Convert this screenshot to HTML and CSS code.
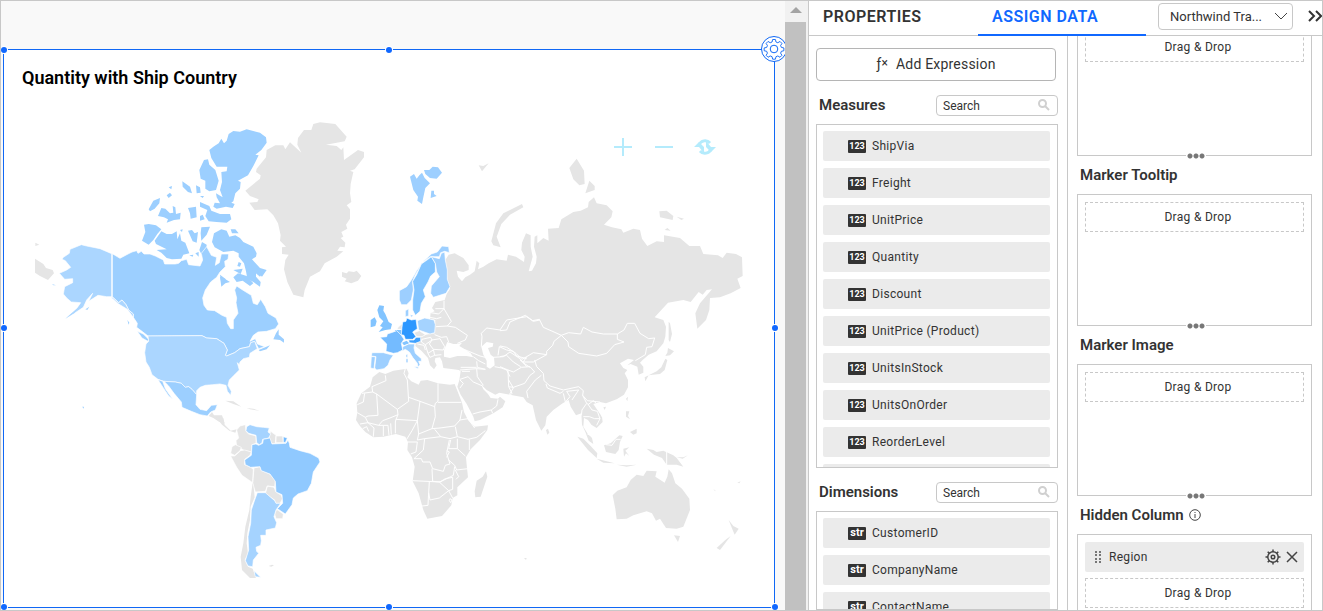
FILE: index.html
```
<!DOCTYPE html>
<html lang="en">
<head>
<meta charset="utf-8">
<title>Dashboard designer</title>
<link rel="stylesheet" href="styles.css">
</head>
<body>
<div class="app">
<main class="canvas">
<section class="widget">
<h1 class="widget-title">Quantity with Ship Country</h1>
<svg class="map" viewBox="0 100 770 507" role="img" aria-label="World map of quantity by ship country">
<g transform="translate(-4 0)">
<g transform="translate(20 110) scale(.33333)" class="canada islands">
<path d="M568,120L580,110 596,100 604,86 612,100 620,92 626,72 640,63 660,65 680,58 720,68 738,82 740,98 724,120 706,134 716,136 700,168 684,196 654,212 662,216 660,236 646,250 640,274 634,278 644,282 638,294 618,290 590,296 580,290 584,278 600,280 590,262 588,250 608,262 600,240 606,216 604,186 620,184 622,170 590,170 574,144Z"/>
<path d="M552,150L564,148 568,164 586,180 596,212 588,240 568,244 556,236 556,212 542,206 538,180Z"/>
<path d="M487,214L510,230 516,250 504,246 488,230ZM528,226L540,232 542,248 530,250ZM446,232L456,228 454,238ZM440,256L450,248 456,256 446,264ZM386,298L400,272 420,264 418,280 404,296 390,304ZM424,294L436,296 450,310 460,308 458,288 466,292 468,312 482,308 480,328 462,330 440,338 444,328 432,322 414,318ZM504,294L528,290 530,322 512,326 510,310ZM540,276L568,288 574,302 600,312 630,312 634,328 620,338 590,336 566,334 556,318 562,300 540,290ZM540,318L548,314 554,328 540,332ZM540,258L552,258 548,264Z"/>
<path d="M372,344L386,342 408,346 424,358 412,372 400,390 386,404 366,392 376,366ZM424,364L440,372 456,372 470,364 472,388 480,370 484,392 496,398 508,430 490,434 484,446 456,448 440,444 424,428 410,420 440,418 408,402 404,392ZM504,362L516,360 524,370 534,366 530,398 518,394ZM544,352L570,350 560,374 544,392 542,370ZM546,396L560,404 558,432 546,436 538,420ZM508,436L520,434 518,440ZM526,430L536,426 536,440Z"/>
<path d="M582,370L604,358 620,362 628,380 646,376 660,384 670,396 700,410 710,430 708,440 696,448 720,474 740,480 726,500 708,484 708,500 722,516 720,530 700,516 682,506 678,484 672,460 656,440 656,430 640,422 610,426 584,412 576,396ZM632,358L646,358 656,370 636,370ZM600,500L614,506 630,516 616,520 604,530ZM656,456L664,460 660,470 652,468ZM480,360L488,358 486,366Z"/>
</g>
<g transform="translate(20 110) scale(.33333)" class="land islands">
<path d="M45,446L70,462 78,474 98,480 102,490 84,510 60,498 45,488ZM46,398L58,404 46,408Z"/>
</g>
<g transform="translate(20 270) scale(.33333)">
<path class="canada" d="M277,-49L300,-35 324,-48 336,-54 350,-58 354,-50 364,-56 372,-48 390,-48 406,-42 430,-30 434,-18 466,-18 476,-20 484,-28 500,-32 506,-16 540,-12 548,-30 544,-50 560,-70 574,-44 590,-38 586,-14 598,-22 604,-48 626,-48 624,-32 614,-26 616,-10 600,6 590,22 572,36 556,60 548,84 552,106 562,120 584,122 606,136 620,142 622,160 632,176 640,176 640,150 654,130 648,98 650,84 644,60 650,48 668,60 694,76 700,100 712,104 722,88 736,110 744,130 768,144 776,162 766,176 740,184 714,186 700,196 690,214 706,206 712,222 734,230 716,236 704,214 692,218 688,230 660,236 644,248 620,258 616,256 622,240 612,220 590,206 560,204 546,197 384,198 366,184 350,172 352,160 340,142 340,132 326,120 318,104 306,90 296,98 277,80ZM352,184L370,192 386,208 384,214 366,204Z"/>
<path class="canada islands" d="M716,240L750,226 740,238 720,244ZM776,178L776,194 792,208 792,218 780,210 760,208 768,190ZM322,150L328,158 326,164ZM640,22L654,10 680,18 700,40 690,48 668,32 650,36ZM600,14L618,28 604,40ZM690,-20L712,-4 724,14 720,20 700,4ZM640,0L668,-4 662,12Z"/>
<path class="usa" d="M384,198L546,197 560,204 590,206 612,220 622,240 616,256 620,258 644,248 660,236 688,230 692,218 704,214 712,236 690,250 688,262 670,266 660,276 658,284 652,278 658,300 642,316 628,330 624,346 634,364 632,376 622,364 618,346 600,342 578,344 556,346 540,352 530,362 530,374 516,358 506,350 496,352 484,340 466,336 432,334 414,328 396,314 388,292 378,276 374,248 378,222 386,214Z"/>
<path class="usa" d="M275,-49L240,-64 200,-72 184,-76 150,-62 148,-50 130,-38 126,-32 136,-28 152,-8 140,0 118,10 134,28 158,26 158,38 134,50 130,72 140,84 154,96 182,98 170,116 136,146 160,132 190,112 200,90 218,70 206,94 234,76 260,80 275,80 296,98 306,90 318,104 326,120 340,132 340,142 322,118 296,102 275,84Z"/>
<path class="usa islands" d="M196,118L208,110 202,120ZM186,410L192,410 192,416ZM96,42L108,46 100,46ZM136,146L170,116 182,104 164,128Z"/>
<path class="canada" d="M432,334L466,336 484,340 496,352 506,350 516,358 530,374 528,404 540,418 560,422 574,406 592,404 586,420 572,426 562,438 540,434 514,424 486,412 484,396 462,370 446,348ZM414,329L428,334 436,356 458,388 446,378 434,360Z"/>
<path class="land islands" d="M566,438L576,426 582,436 606,436 614,460 598,456 580,444ZM616,392L640,394 664,410 640,402ZM680,414L700,416 718,422 690,418Z"/>
</g>
<g transform="translate(200 410) scale(.33333)" class="land">
<path class="islands" d="M48,22L70,24 74,44 92,62 110,58 106,68 88,62 66,44Z"/>
<path d="M110,60L120,48 136,44 138,64 146,72 168,78 168,100 156,104 154,126 134,122 110,108 108,92 116,84Z"/>
<path d="M212,64L228,76 226,100 216,102 206,86ZM228,78L248,78 250,98 228,98ZM96,110L106,104 124,112 120,122 104,136 92,130ZM92,138L104,138 122,122 134,120 154,126 150,136 134,148 134,164 152,172 160,178 158,218 126,196 110,172ZM162,174L180,170 184,182 210,192 226,212 224,230 202,228 196,244 166,246 158,218ZM202,228L222,232 228,246 244,256 248,266 240,280 226,280 224,270 196,252ZM230,298L250,312 248,326 228,326 224,312Z"/>
<path class="islands" d="M158,218L162,240 164,262 152,290 150,330 142,370 140,400 144,430 134,450 144,470 158,476 168,504 150,504 126,480 122,440 130,400 136,350 148,300 152,260ZM206,468L216,464 222,466 214,470Z"/>
<path class="light" d="M140,50L150,44 170,50 190,52 208,54 204,66 212,72 206,84 188,88 186,98 178,104 170,98 168,76 146,70 138,62Z"/>
<path class="light" d="M172,248L196,248 224,272 228,280 242,280 228,300 222,320 230,338 226,354 198,360 198,376 182,376 184,392 182,406 168,412 170,424 176,430 160,450 158,470 144,468 136,452 146,420 144,380 152,340 154,300 164,270ZM162,482L182,502 166,500Z"/>
<path class="france" d="M250,80L262,84 256,98 250,96Z"/>
<path class="brazil" d="M156,104L168,102 176,106 188,100 190,88 210,84 216,102 258,100 264,90 268,100 270,112 300,122 330,130 356,144 360,156 340,186 334,220 322,242 294,252 280,264 276,284 256,312 232,296 248,280 246,254 228,246 226,214 210,192 184,182 180,170 152,172 136,164 134,150 154,136Z"/>
</g>
<g transform="translate(230 110) scale(.33333)">
<path class="land islands" d="M46,242L90,206 92,196 78,186 80,176 108,142 110,120 136,106 160,106 166,118 180,97 214,128 202,104 204,84 222,60 244,60 250,42 270,37 316,42 350,80 344,94 288,104 320,108 334,120 340,112 342,150 384,120 402,126 402,142 374,178 360,182 370,186 362,222 360,250 364,276 350,286 360,298 360,326 348,344 352,356 334,366 340,380 332,384 346,398 344,412 330,410 322,422 340,424 320,440 284,460 270,484 240,500 224,540 220,562 190,554 172,516 162,478 166,450 176,434 156,432 156,412 168,410 150,392 152,376 144,340 130,316 112,298 74,300 58,278 82,276 86,268 60,258Z"/>
<path class="land islands" d="M336,486L350,490 356,484 372,486 380,482 394,498 384,512 364,520 344,514 350,506 336,500Z"/>
<path class="norway islands" d="M540,200L552,192 560,206 568,196 576,188 584,204 600,220 586,234 580,262 576,282 562,272 564,260 550,240ZM582,180L598,180 608,170 624,172 636,188 620,206 600,204 586,192ZM604,242L612,242 612,252 620,258 602,264Z"/>
</g>
<g transform="translate(460 140) scale(.33333)" class="land islands">
<path d="M-34,344L-16,340 10,354 26,376 26,390 10,396 -10,392 -6,410 6,424 16,412 30,404 44,394 50,362 58,370 54,388 70,380 86,370 110,358 140,362 144,344 168,350 192,366 194,350 184,330 186,308 198,280 212,286 212,320 218,350 206,394 216,392 228,370 230,350 222,320 224,290 232,286 232,310 250,294 266,302 264,266 296,264 304,238 340,216 362,212 384,202 386,186 402,172 410,190 440,196 458,214 454,232 432,254 456,262 484,268 490,278 520,266 540,270 546,296 562,318 590,304 612,306 612,286 660,294 688,318 720,318 730,342 774,346 788,354 800,338 828,342 846,352 848,408 832,416 842,444 812,460 780,472 750,474 748,510 738,540 712,566 706,520 720,490 756,448 740,450 728,464 716,456 692,486 670,480 624,488 584,532 610,540 618,560 616,590 610,610 590,634 566,644 548,660 540,668 550,680 550,698 536,704 532,680 512,672 502,676 522,660 504,656 480,670 490,684 502,690 494,700 504,720 504,742 492,764 470,778 438,790 420,786 400,792 412,810 426,830 428,846 410,864 394,854 384,840 372,834 370,860 382,880 396,894 400,912 386,902 376,876 366,854 364,820 348,826 332,800 326,780 308,790 280,810 260,830 256,856 244,872 228,840 218,796 200,786 190,772 150,764 118,758 106,764 80,750 64,734 70,748 84,762 92,774 114,776 120,770 136,784 128,802 100,820 60,840 44,844 40,830 20,792 2,764 -8,740 -2,720 2,694 -4,690 -20,688 -50,684 -54,664 -60,652 -74,654 -76,664 -70,676 -78,688 -90,676 -96,654 -116,632 -134,618 -132,608 -116,600 -118,592 -102,584 -76,580 -74,540 -90,536 -88,518 -76,514 -84,504 -74,486 -46,480 -40,462 -30,446 -38,418 -44,360Z"/>
<path d="M328,84L350,56 372,92 374,132 358,136 340,118ZM388,122L404,138 404,150 376,160ZM94,304L108,250 130,220 186,192 190,202 150,224 124,252 110,290 122,322 100,316ZM598,214L620,212 640,228 638,240 600,232ZM650,230L672,236 664,240ZM614,270L622,264 632,272ZM56,76L70,78 86,70 66,94ZM626,545L630,550 636,582 630,606 626,600Z"/>
</g>
<g transform="translate(500 310) scale(.33333)">
<path class="land islands" d="M338,556L352,542 380,532 392,510 410,494 430,498 440,482 470,484 466,500 494,518 502,500 506,478 516,490 526,520 546,536 568,566 570,600 550,650 530,656 498,654 480,626 468,632 456,610 440,604 400,616 380,626 350,628 346,596ZM522,676L540,678 534,696ZM686,630L700,648 716,656 704,674 698,660ZM692,678L660,720 650,714 676,690Z"/>
<path class="land islands" d="M440,416L460,420 470,426 490,422 520,436 530,444 550,470 530,464 500,464 486,444 462,434ZM312,406L332,400 358,376 368,378 360,396 356,420 346,432 318,426ZM232,380L250,386 272,408 292,430 290,444 264,420ZM290,446L320,454 344,460 310,458ZM370,416L388,412 376,422 388,438 378,430 372,440ZM378,304L388,304 384,318 390,328 378,320ZM390,366L410,356 410,370 400,374ZM378,266L384,260 382,274ZM310,292L318,290 314,300ZM138,360L144,356 148,368 142,374Z"/>
<path class="land islands" d="M504,114L522,124 510,136 496,138 502,128ZM496,146L502,150 494,180 480,192 458,194 446,196 436,214 434,202 470,184 484,172ZM530,442L550,442 564,436 548,446ZM350,464L380,466 410,464 380,470ZM640,536L648,544 644,542ZM712,518L722,514 718,520ZM72,744L80,744 78,750Z"/>
<path class="line" d="M0,62L20,60 30,36 76,16 98,32 118,28 130,52 162,66 184,76 206,68 242,72 250,52 276,66 310,72 352,72 372,60 382,40 404,40 420,70 446,86 464,84 456,110 440,112 436,134 406,152M184,76L204,96 206,110 236,130 290,138 320,130 344,104 372,96 352,88 352,72M184,76L162,94 158,106 140,124 140,134 100,128 80,140 66,148 48,130 20,112 0,108M80,140L70,156 100,156 140,134M104,150L110,170 130,190 132,212 150,228 190,240 236,230 250,242 248,256 262,272 300,276M138,222L142,234 180,250 190,244M190,250L196,276 210,260 200,244 236,240 216,270M248,256L260,280 246,300 244,316M262,280L276,300 292,304 300,326 290,346M264,284L280,272 300,290 306,320M250,320L268,320 284,326 300,326M124,196L106,210 80,244 84,264M24,180L40,186 64,172 90,170 104,186 90,196 74,220 40,232 26,230 24,180M26,230L36,250 30,256M0,140L20,136 40,156 62,170M0,170L24,180M60,150L72,160 90,172M500,426V466M318,404L336,406 348,388 362,388M262,372L272,376"/>
</g>
<g transform="translate(340 240) scale(.33333)">
<path class="sea" d="M312,350L312,330 322,306 340,312 352,312 366,308 358,318 372,326 392,340 400,352 380,348 352,348 330,354ZM424,320L440,306 460,310 458,320 444,324 452,344 462,352 464,376 450,386 440,380 440,362 430,344Z"/>
<path class="line" d="M286,206L312,206M312,182V206L334,244 322,258 288,260M322,258L346,262 382,286 376,300 352,310M284,284L304,292 320,290 326,306M276,300L300,296 314,320 310,330 280,328 268,312ZM246,298L272,292 276,300 256,314 244,306ZM256,314L264,340 280,330M280,328L284,346 304,344M232,312L252,316 256,330M264,340L270,352 284,346M272,218L296,222 312,206M270,232L290,236 304,232M424,320L426,290 424,280 440,264 480,270 500,240 560,230 580,244 600,240M474,346L478,320 500,330 520,334 530,348 560,356M460,352L490,350 510,336 540,356 560,380M372,328L420,348 436,352M400,350L416,362 436,372M410,364L412,382 436,388M464,380L484,384 500,390 510,410M362,382L410,382"/>
<path class="norway" d="M178,152L200,140 214,120 230,92 250,64 274,42 292,36 306,18 326,20 328,38 314,34 302,38 298,50 272,50 262,56 244,70 236,88 226,104 218,124 220,150 214,180 200,194 184,194 178,180Z"/>
<path class="sweden" d="M218,180L222,150 218,124 230,104 244,72 264,58 274,50 286,70 286,96 272,108 264,126 250,150 256,170 244,190 240,214 226,226 218,210Z"/>
<path class="norway" d="M274,50L298,56 304,40 314,36 316,60 322,90 322,118 330,140 318,160 280,172 272,160 274,138 298,110 290,96 286,70Z"/>
<path class="sweden islands" d="M118,196L132,198 130,212 136,222 146,246 156,252 152,268 136,270 116,276 128,262 120,258 130,244 118,232 112,210ZM92,240L104,232 110,244 106,258 92,262ZM164,270L184,270 186,282 176,284ZM186,308L200,302 208,310 192,316Z"/>
<path class="norway" d="M196,212L206,206 206,228 196,230ZM210,224L220,226 214,232ZM188,320L206,312 224,312 222,324 226,340 244,356 244,364 236,364 240,374 234,382 232,370 218,352 208,336 196,328 188,332ZM222,380L236,380 234,386ZM198,344L203,342 203,352 198,352ZM198,356L204,356 204,368 198,368ZM96,338L130,338 160,346 150,360 144,376 132,386 110,390 104,384 108,350 94,348ZM94,350L106,350 102,386 92,384Z"/>
<path class="land" d="M174,262L188,250 186,268 172,268ZM222,278L238,272 256,284 246,290 230,290Z"/>
<path class="france" d="M120,292L140,290 142,282 160,276 170,272 184,286 192,298 184,310 188,330 172,338 160,340 138,334 140,312Z"/>
<path class="light" d="M232,242L254,234 282,240 286,254 284,278 270,282 236,270Z"/>
<path class="austria" d="M206,300L222,300 228,292 242,292 242,304 226,310 208,308Z"/>
<path class="germany" d="M188,246L198,244 200,234 214,240 228,238 232,266 218,276 228,290 218,298 196,298 192,286 184,284 186,262Z"/>
</g>
<g transform="translate(340 360) scale(.33333)">
<path class="land islands" d="M118,36L136,42 160,32 200,26 206,40 202,52 214,64 236,74 242,62 262,60 294,70 330,74 344,72 352,92 366,128 372,156 384,180 404,200 444,196 442,210 420,240 392,268 378,292 380,314 384,352 352,382 352,406 338,414 334,436 306,468 262,476 250,450 236,400 218,364 224,320 216,292 202,270 204,246 196,230 168,222 130,230 100,232 76,216 58,196 48,180 52,158 50,130 64,100 90,80 98,52ZM438,334L442,350 422,410 406,412 404,394 410,362 428,350Z"/>
<path class="line" d="M136,46L138,62 96,80 98,96 66,100M74,100L70,126 52,134M98,96L110,102 172,148 206,124 202,60 192,40 196,26M206,112L240,124 284,140 286,130 294,124V70M294,127H364M110,102L114,166 84,168 76,172 52,158M172,148L174,164 150,174 128,182 116,196 84,188M76,172L84,188 60,192M174,164L168,178 232,182 240,124M232,182L236,222 276,206 286,170 284,140M276,206L300,204 344,198 360,180 366,150M346,200L352,230 384,238 410,232 436,212M360,180L384,176 404,204M284,208L302,230 330,236 352,230M236,222L232,240 254,236 302,230M352,236V266L376,288M388,238V270M332,240L326,266 352,266M254,236L250,270 222,296 244,296 248,306 270,306 278,326 310,334 316,316 330,312 320,280 328,240M320,272L328,276 320,292M326,300L344,316 350,330 384,326M276,326L278,364 300,366 340,346 344,320M346,330L356,350 348,358M218,362L300,366M268,366L266,398 264,436 246,438M266,398L270,420 298,414 326,392 300,368M300,366L316,356 338,352 338,388 326,392 338,414M330,416L336,420 332,428 328,422ZM166,220V186L168,178M200,238L216,212 232,182M154,224L152,190M147,226L144,196 130,196V228M130,196H116M100,230L102,204 84,188M204,246H232L228,276 212,282M68,206L80,200 86,214M360,30L410,26 436,28M410,26L412,50 430,76M360,58L384,50 400,66 428,78M366,34L390,34M398,162L420,156 454,150 470,138 474,118M454,150L458,160M506,60L520,84 508,104M360,60L370,70 360,84"/>
</g>
</g>
</svg>
<div class="map-tools">
<button type="button" aria-label="Zoom in"><svg viewBox="0 0 20 20"><path d="M1 10H19M10 1V19"/></svg></button>
<button type="button" aria-label="Zoom out"><svg viewBox="0 0 20 20"><path d="M1 10H19"/></svg></button>
<button type="button" aria-label="Reset"><svg viewBox="0 0 20 20"><path class="thick" d="M4 8A6.500 6.500 0 0 1 15 6M16 12A6.500 6.500 0 0 1 5 14"/><path class="solid" d="M-1 10L4 5 9 10ZM11 10H21L16 15ZM11 4L16 10 11 10ZM9 16L4 10 9 10Z"/></svg></button>
</div>
<i class="handle n w"></i><i class="handle n c"></i><i class="handle m w"></i><i class="handle m e"></i><i class="handle s w"></i><i class="handle s c"></i><i class="handle s e"></i>
<button type="button" class="widget-gear" aria-label="Widget settings"><svg viewBox="0 0 28 28"><circle cx="14" cy="14" r="12.500"/><circle cx="14" cy="14" r="3.800"/><path d="M12.500 4.500h3l.6 2.700 2 .8 2.300-1.400 2.100 2.100-1.400 2.300.8 2 2.700.6v3l-2.700.6-.8 2 1.400 2.300-2.100 2.100-2.300-1.400-2 .8-.6 2.700h-3l-.6-2.700-2-.8-2.300 1.400-2.100-2.100 1.400-2.300-.8-2-2.700-.6v-3l2.700-.6.8-2-1.400-2.300 2.100-2.100 2.300 1.400 2-.8Z" transform="translate(1 -1) scale(.93) translate(0 1.400)"/></svg></button>
</section>
</main>
<div class="scrollbar"><i class="scroll-up"></i><i class="scroll-thumb"></i></div>
<aside class="panel">
<header class="panel-head">
<nav class="tabs"><button type="button" class="tab">PROPERTIES</button><button type="button" class="tab active">ASSIGN DATA</button></nav>
<div class="source"><select aria-label="Data source"><option>Northwind Tra...</option></select><svg viewBox="0 0 14 8"><path d="M1 1L7 7 13 1"/></svg></div>
<button type="button" class="collapse" aria-label="Collapse panel"><svg viewBox="0 0 14 12"><path d="M1 1L6 6 1 11M8 1L13 6 8 11"/></svg></button>
</header>
<div class="columns">
<div class="fields">
<button type="button" class="add"><span class="fx">ƒ<sup>×</sup></span>Add Expression</button>
<div class="field-head"><h2>Measures</h2><label class="search"><input type="text" value="Search" aria-label="Search measures"><svg viewBox="0 0 12 12"><circle cx="4.500" cy="4.500" r="3.500"/><path d="M7 7L11 11"/></svg></label></div>
<ul class="list measures">
<li><b class="tag">123</b>ShipVia</li><li><b class="tag">123</b>Freight</li><li><b class="tag">123</b>UnitPrice</li><li><b class="tag">123</b>Quantity</li><li><b class="tag">123</b>Discount</li><li><b class="tag">123</b>UnitPrice (Product)</li><li><b class="tag">123</b>UnitsInStock</li><li><b class="tag">123</b>UnitsOnOrder</li><li><b class="tag">123</b>ReorderLevel</li><li></li>
</ul>
<div class="field-head"><h2>Dimensions</h2><label class="search"><input type="text" value="Search" aria-label="Search dimensions"><svg viewBox="0 0 12 12"><circle cx="4.500" cy="4.500" r="3.500"/><path d="M7 7L11 11"/></svg></label></div>
<ul class="list dimensions">
<li><b class="tag str">str</b>CustomerID</li><li><b class="tag str">str</b>CompanyName</li><li><b class="tag str">str</b>ContactName</li>
</ul>
</div>
<div class="slots">
<div class="slots-inner">
<div class="slot"><div class="drop">Drag &amp; Drop</div><i class="grip"></i></div>
<h2>Marker Tooltip</h2>
<div class="slot"><div class="drop">Drag &amp; Drop</div><i class="grip"></i></div>
<h2>Marker Image</h2>
<div class="slot"><div class="drop">Drag &amp; Drop</div><i class="grip"></i></div>
<h2>Hidden Column <svg class="info" viewBox="0 0 12 12"><circle cx="6" cy="6" r="5.300"/><path d="M6 5V9M6 3V4"/></svg></h2>
<div class="slot">
<div class="pill"><svg class="drag" viewBox="0 0 6 12"><path d="M0 0h2v2H0zM4 0h2v2H4zM0 3h2v2H0zM4 3h2v2H4zM0 7h2v2H0zM4 7h2v2H4zM0 10h2v2H0zM4 10h2v2H4z"/></svg><span>Region</span>
<button type="button" aria-label="Region settings"><svg viewBox="0 0 16 16"><circle cx="8" cy="8" r="5.200" class="ring"/><circle cx="8" cy="8" r="1.800"/><path d="M8 0.500V3M8 13V15.500M.500 8H3M13 8H15.500M2.700 2.700L4.400 4.400M11.600 11.600L13.300 13.300M2.700 13.300L4.400 11.600M11.600 4.400L13.300 2.700"/></svg></button>
<button type="button" aria-label="Remove Region"><svg viewBox="0 0 16 16"><path d="M3 3L13 13M13 3L3 13"/></svg></button></div>
<div class="drop">Drag &amp; Drop</div></div>
</div>
</div>
</div>
</aside>
</div>
</body>
</html>
```
FILE: styles.css
```
* { box-sizing: border-box; }
body { margin: 0; font-family: Roboto, "Liberation Sans", sans-serif; color: #333; }
h1, h2, ul { margin: 0; padding: 0; }
button { font: inherit; color: inherit; background: none; border: 0; padding: 0; }
svg { fill: none; }
.app { display: flex; height: 100vh; border: 1px solid #c8c8c8; overflow: hidden; }
.canvas { flex: 1; min-width: 0; background: #f9f9f9; padding: 48px 10px 2px 2px; overflow: hidden; }
.widget { position: relative; height: 100%; background: #fff; border: 1px solid #1068f5; }
.widget-title { padding: 17px 17px 0 18px; font-size: 18px; line-height: 22px; font-weight: 600; color: #000; }
.map { display: block; width: 100%; margin-top: 11px; }
.land { fill: #e5e5e5; }
.land, .canada, .usa, .light, .brazil, .france, .sweden, .norway, .austria, .germany { stroke: #fff; stroke-width: 2; stroke-linejoin: round; }
.canada { fill: #9ccfff; }
.usa { fill: #abd6ff; }
.light { fill: #a5d3ff; }
.brazil { fill: #90c9ff; }
.france { fill: #74bbff; }
.sweden { fill: #82c4ff; }
.norway { fill: #9dcfff; }
.austria { fill: #3fa1ff; }
.germany { fill: #2e98ff; }
.islands { stroke: none; }
.sea { fill: #fff; }
.line { stroke: #fff; stroke-width: 3; }
.map-tools { position: absolute; top: 87px; right: 59px; display: flex; gap: 21px; }
.map-tools svg { display: block; width: 20px; height: 20px; overflow: visible; stroke: #b4ebfc; stroke-width: 2; }
.map-tools .thick { stroke-width: 3; }
.map-tools .solid { fill: #b4ebfc; stroke: none; }
.handle { position: absolute; width: 6px; height: 6px; border-radius: 50%; background: #1068ff; box-shadow: 0 0 0 1px #fff; }
.n { top: -3px; }
.m { top: calc(50% - 4px); }
.s { bottom: -3px; }
.w { left: -3px; }
.c { left: calc(50% - 3px); }
.e { right: -4px; }
.widget-gear { position: absolute; top: -15px; right: -14px; width: 28px; height: 28px; }
.widget-gear svg { display: block; fill: #fff; stroke: #1068f5; stroke-width: 1; }
.widget-gear path { fill: none; }
.scrollbar { width: 24px; background: #f1f1f1; display: flex; flex-direction: column; align-items: center; padding: 6px 2px 0 0; border-right: 1px solid #c8c8c8; }
.scroll-up { border: 6px solid transparent; border-top: 0; border-bottom-color: #a3a3a3; margin-bottom: 9px; }
.scroll-thumb { flex: 1; width: 100%; background: #c1c1c1; }
.panel { width: 513px; background: #fff; display: flex; flex-direction: column; }
.panel-head { display: flex; height: 35px; border-bottom: 1px solid #c8c8c8; flex: none; }
.tabs { display: flex; }
.tab { width: 169px; height: 35px; padding: 0 0 3px 14px; text-align: left; font-size: 16px; font-weight: 600; letter-spacing: 0.5px; border-bottom: 2px solid transparent; }
.tab.active { color: #1068ff; border-color: #1068ff; width: 168px; }
.source { position: relative; margin: 2px 0 0 12px; width: 135px; height: 27px; }
.source select { width: 100%; height: 100%; appearance: none; border: 1px solid #c8c8c8; border-radius: 4px; background: #fff; padding: 0 0 0 11px; font: 13px Roboto, sans-serif; color: #333; }
.source svg { position: absolute; right: 5px; top: 9px; width: 14px; height: 8px; stroke: #444; }
.collapse { margin-left: 15px; padding-bottom: 4px; }
.collapse svg { width: 14px; height: 12px; stroke: #333; stroke-width: 2; display: block; }
.columns { display: flex; flex: 1; min-height: 0; }
.fields { width: 259px; padding: 12px 9px 0 7px; border-right: 1px solid #c8c8c8; display: flex; flex-direction: column; overflow: hidden; }
.add { height: 33px; flex: none; margin-right: 2px; padding-bottom: 2px; border: 1px solid #b5b5b5; border-radius: 4px; font-size: 14px; font-weight: 400; letter-spacing: 0.2px; }
.fx { margin-right: 8px; }
.fx sup { font-size: 12px; line-height: 0; vertical-align: 2px; }
.field-head { display: flex; justify-content: space-between; align-items: center; height: 21px; margin: 14px 0 8px; padding-left: 3px; flex: none; }
.field-head h2 { padding-bottom: 2px; }
h2 { font-size: 15px; line-height: 20px; font-weight: 600; }
.search { position: relative; width: 122px; height: 21px; }
.search input { display: block; width: 100%; height: 100%; border: 1px solid #c8c8c8; border-radius: 4px; padding: 0 24px 0 6px; font: 12px Roboto, sans-serif; color: #333; }
.search svg { position: absolute; right: 8px; top: 4px; width: 12px; height: 12px; stroke: #d0d0d0; stroke-width: 2; }
.list { list-style: none; border: 1px solid #c8c8c8; padding: 6px 7px 0 6px; display: flex; flex-direction: column; gap: 7px; overflow: hidden; }
.measures { height: 344px; flex: none; }
.dimensions { flex: 1; }
.list li { height: 30px; flex: none; display: flex; align-items: center; padding-left: 25px; background: #ebebeb; border-radius: 2px; font-size: 12px; letter-spacing: 0.3px; }
.tag { width: 18px; height: 13px; margin-right: 6px; border-radius: 1px; background: #333; color: #fff; font-size: 9px; line-height: 13px; letter-spacing: 0; text-align: center; }
.str { font-size: 11px; line-height: 12px; }
.slots { flex: 1; overflow: hidden; padding: 0 10px 0 9px; }
.slots-inner { margin-top: -12px; }
.slot { position: relative; height: 132px; border: 1px solid #c8c8c8; padding: 7px; display: flex; flex-direction: column; gap: 6px; }
.drop { height: 30px; flex: none; border: 1px dashed #c8c8c8; display: flex; align-items: center; justify-content: center; padding-left: 7px; font-size: 12px; letter-spacing: 0.3px; }
.slots h2 { padding: 9px 0 9px 3px; display: flex; align-items: center; gap: 5px; }
.info { width: 12px; height: 12px; stroke: #444; }
.grip { position: absolute; bottom: -4px; left: calc(50% - 9px); width: 20px; height: 6px; background: radial-gradient(circle, #777 2px, #fff 3px) 0 0 / 6px 6px; border: solid #fff; border-width: 0 1px; }
.pill { display: flex; align-items: center; height: 30px; flex: none; padding: 0 4px 0 10px; background: #ebebeb; border-radius: 2px; font-size: 12px; letter-spacing: 0.3px; }
.pill span { flex: 1; margin-left: 8px; }
.drag { width: 6px; height: 12px; fill: #777; }
.pill button { margin-left: 3px; }
.pill button svg { display: block; width: 16px; height: 16px; stroke: #444; stroke-width: 1.5; }
```
